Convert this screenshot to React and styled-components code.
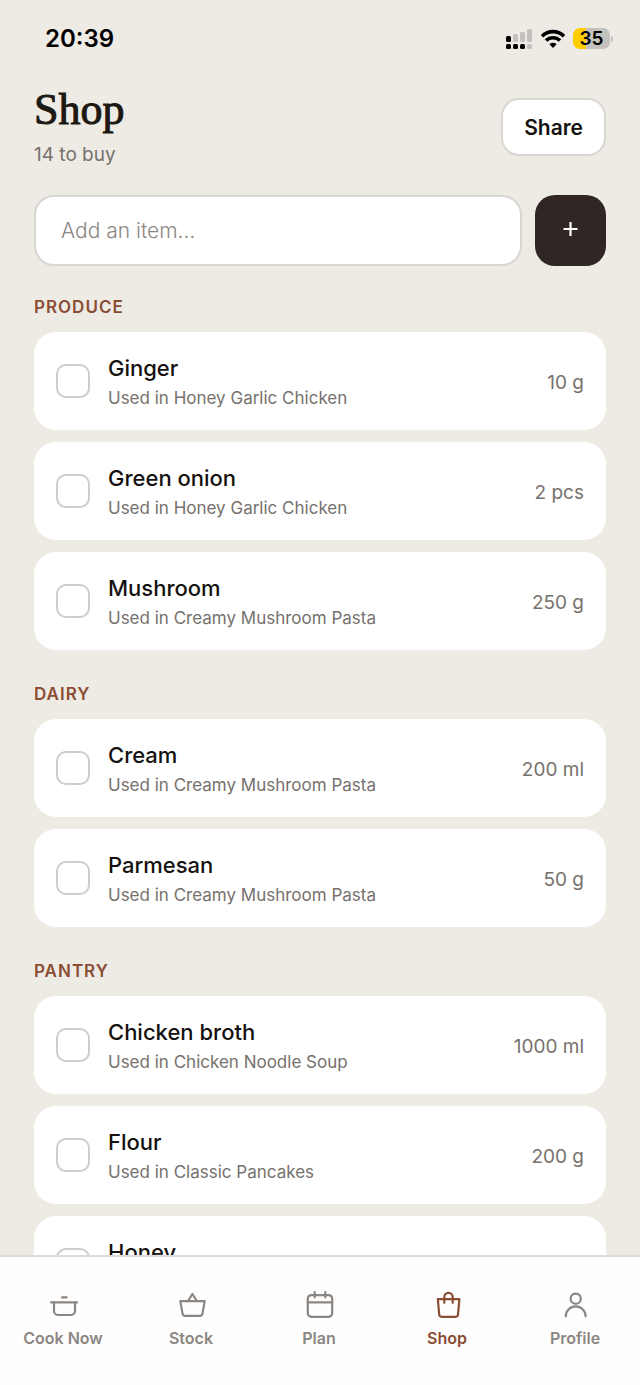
import React, { useState } from "react"
import styled, { createGlobalStyle } from "styled-components"

const groups = [
  {
    name: "Produce",
    items: [
      { id: "ginger", name: "Ginger", recipe: "Honey Garlic Chicken", amount: "10 g" },
      { id: "green-onion", name: "Green onion", recipe: "Honey Garlic Chicken", amount: "2 pcs" },
      { id: "mushroom", name: "Mushroom", recipe: "Creamy Mushroom Pasta", amount: "250 g" },
    ],
  },
  {
    name: "Dairy",
    items: [
      { id: "cream", name: "Cream", recipe: "Creamy Mushroom Pasta", amount: "200 ml" },
      { id: "parmesan", name: "Parmesan", recipe: "Creamy Mushroom Pasta", amount: "50 g" },
    ],
  },
  {
    name: "Pantry",
    items: [
      { id: "chicken-broth", name: "Chicken broth", recipe: "Chicken Noodle Soup", amount: "1000 ml" },
      { id: "flour", name: "Flour", recipe: "Classic Pancakes", amount: "200 g" },
      { id: "honey", name: "Honey", recipe: "Honey Garlic Chicken", amount: "30 ml" },
    ],
  },
]

const tabs = [
  {
    label: "Cook Now",
    icon: (
      <>
        <path d="M14 7.3h4.6" />
        <path d="M3 12.3h26" />
        <path d="M6 12.3v8.7a4 4 0 0 0 4 4h13a4 4 0 0 0 4-4v-8.7" />
      </>
    ),
  },
  {
    label: "Stock",
    icon: (
      <>
        <path d="M4.3 11.2h24.4l-2.3 12.7a2.3 2.3 0 0 1-2.3 1.9H8.9a2.3 2.3 0 0 1-2.3-1.9z" />
        <path d="M12 11l4.4-7 4.4 7" />
      </>
    ),
  },
  {
    label: "Plan",
    icon: (
      <>
        <rect x="3.8" y="5.1" width="24.4" height="21.7" rx="3.5" />
        <path d="M3.8 12.3h24.4M10.7 2v5.5M21.3 2v5.5" />
      </>
    ),
  },
  {
    label: "Shop",
    icon: (
      <>
        <path d="M5.8 9.1h21.6l-1.4 15.4a2.5 2.5 0 0 1-2.5 2.3H9.7a2.5 2.5 0 0 1-2.5-2.3z" />
        <path d="M12.3 12.8V7a4.2 4.2 0 0 1 8.4 0v5.8" />
      </>
    ),
  },
  {
    label: "Profile",
    icon: (
      <>
        <circle cx="15.7" cy="8.7" r="5.1" />
        <path d="M5.8 26.3a9.9 9.9 0 0 1 19.8 0" />
      </>
    ),
  },
]

function StatusBar() {
  return (
    <Status>
      <Clock>20:39</Clock>
      <StatusIcons>
        <svg width="27" height="22" viewBox="0 0 27 22">
          <g fill="#c3c1bd">
            <rect x="7" y="6" width="5" height="8" rx="1.5" />
            <rect x="14" y="4" width="5" height="10" rx="1.5" />
            <rect x="21" y="1" width="5" height="13" rx="1.5" />
            <rect x="21" y="16" width="5" height="5" rx="1.5" />
          </g>
          <rect x="0" y="8" width="5" height="6" rx="1.5" />
          <rect x="0" y="16" width="5" height="5" rx="1.5" />
          <rect x="7" y="16" width="5" height="5" rx="1.5" />
          <rect x="14" y="16" width="5" height="5" rx="1.5" />
        </svg>
        <svg width="24" height="20" viewBox="0 0 24 20">
          <g fill="none" stroke="#000" strokeWidth="3.6">
            <path d="M1 7.2a15.6 15.6 0 0 1 22 0" />
            <path d="M5 11.6a9.9 9.9 0 0 1 14 0" />
          </g>
          <path d="M12 19l-3.6-3.7a5.2 5.2 0 0 1 7.2 0z" />
        </svg>
        <Battery>
          <BatteryLevel>35</BatteryLevel>
          <BatteryTip />
        </Battery>
      </StatusIcons>
    </Status>
  )
}

function ShopItem({ item, checked, onToggle }) {
  return (
    <Card>
      <CheckBox type="checkbox" id={item.id} checked={checked} onChange={onToggle} />
      <ItemLabel htmlFor={item.id}>
        <ItemName $done={checked}>{item.name}</ItemName>
        <ItemNote>Used in {item.recipe}</ItemNote>
      </ItemLabel>
      <Amount>{item.amount}</Amount>
    </Card>
  )
}

function App() {
  const [checked, setChecked] = useState({})
  const [draft, setDraft] = useState("")
  const [activeTab, setActiveTab] = useState("Shop")

  const toggle = id => {
    setChecked({ ...checked, [id]: !checked[id] })
  }

  return (
    <>
      <GlobalStyle />
      <Screen>
        <StatusBar />
        <Content>
          <Header>
            <div>
              <Title>Shop</Title>
              <Subtitle>14 to buy</Subtitle>
            </div>
            <ShareButton type="button">Share</ShareButton>
          </Header>
          <AddForm onSubmit={e => e.preventDefault()}>
            <AddInput
              aria-label="Add an item"
              placeholder="Add an item…"
              value={draft}
              onChange={e => setDraft(e.target.value)}
            />
            <AddButton type="submit" aria-label="Add">
              <svg width="16" height="16" viewBox="0 0 16 16">
                <path d="M7.5 1v14M0.5 8h14" stroke="#fff" strokeWidth="2.2" />
              </svg>
            </AddButton>
          </AddForm>
          <Groups>
            {groups.map(group => (
              <section key={group.name}>
                <GroupTitle>{group.name}</GroupTitle>
                <Items>
                  {group.items.map(item => (
                    <ShopItem
                      key={item.id}
                      item={item}
                      checked={!!checked[item.id]}
                      onToggle={() => toggle(item.id)}
                    />
                  ))}
                </Items>
              </section>
            ))}
          </Groups>
        </Content>
        <TabBar>
          {tabs.map(tab => (
            <Tab
              key={tab.label}
              type="button"
              $active={tab.label === activeTab}
              onClick={() => setActiveTab(tab.label)}
            >
              <TabIcon viewBox="0 0 30 28">{tab.icon}</TabIcon>
              {tab.label}
            </Tab>
          ))}
        </TabBar>
      </Screen>
    </>
  )
}
export default App

const GlobalStyle = createGlobalStyle`
  * {
    box-sizing: border-box;
  }
  body {
    margin: 0;
    background: #eeebe5;
    color: #141210;
    font-family: Inter, "Liberation Sans", sans-serif;
  }
  button, input {
    font-family: inherit;
  }
`
const Screen = styled.div`
  display: flex;
  flex-direction: column;
  height: 100vh;
`
const Status = styled.div`
  display: flex;
  flex-shrink: 0;
  align-items: center;
  justify-content: space-between;
  height: 77px;
  padding: 0 27px 0 45px;
`
const Clock = styled.span`
  font-size: 24px;
  font-weight: 600;
  color: #000;
`
const StatusIcons = styled.div`
  display: flex;
  align-items: center;
  gap: 8px;
`
const Battery = styled.div`
  display: flex;
  align-items: center;
  gap: 1px;
`
const BatteryLevel = styled.span`
  width: 37px;
  height: 21px;
  border-radius: 7px;
  background: linear-gradient(to right, #ffcc00 35%, #c3c1bd 35%);
  color: #000;
  font-size: 19px;
  font-weight: 600;
  line-height: 21px;
  text-align: center;
`
const BatteryTip = styled.span`
  width: 2px;
  height: 6px;
  border-radius: 0 2px 2px 0;
  background: #c3c1bd;
`
const Content = styled.main`
  flex: 1;
  min-height: 0;
  overflow-y: auto;
  scrollbar-width: none;
  padding: 8px 34px 0;
`
const Header = styled.header`
  display: flex;
  align-items: center;
  justify-content: space-between;
`
const Title = styled.h1`
  margin: 0;
  font-family: "Liberation Serif", serif;
  font-size: 44px;
  font-weight: 400;
  line-height: 50px;
  -webkit-text-stroke: 1px #1c1812;
  color: #1c1812;
`
const Subtitle = styled.p`
  margin: 6px 0 0;
  font-size: 19px;
  line-height: 28px;
  color: #76716d;
`
const ShareButton = styled.button`
  height: 58px;
  padding: 1px 21px 0;
  border: 2px solid #dad7d3;
  border-radius: 18px;
  background: #fff;
  color: #141210;
  font-size: 21px;
  font-weight: 600;
  cursor: pointer;
`
const AddForm = styled.form`
  display: flex;
  gap: 13px;
  margin-top: 26px;
`
const AddInput = styled.input`
  flex: 1;
  min-width: 0;
  height: 71px;
  padding: 0 25px;
  border: 2px solid #d8d6d3;
  border-radius: 20px;
  background: #fff;
  color: #141210;
  font-size: 21px;
  &::placeholder {
    color: #8a8683;
    font-weight: 300;
    opacity: 1;
  }
`
const AddButton = styled.button`
  display: flex;
  align-items: center;
  justify-content: center;
  width: 71px;
  height: 71px;
  padding: 0 0 4px;
  border: none;
  border-radius: 20px;
  background: #302624;
  cursor: pointer;
`
const Groups = styled.div`
  display: flex;
  flex-direction: column;
  gap: 32px;
  padding-top: 29px;
`
const GroupTitle = styled.h2`
  margin: 0 0 13px;
  font-size: 17px;
  font-weight: 600;
  line-height: 24px;
  letter-spacing: 1px;
  text-transform: uppercase;
  color: #8a4d34;
`
const Items = styled.ul`
  display: flex;
  flex-direction: column;
  gap: 12px;
  margin: 0;
  padding: 0;
  list-style: none;
`
const Card = styled.li`
  display: flex;
  align-items: center;
  height: 98px;
  padding: 0 22px;
  border-radius: 22px;
  background: #fff;
`
const CheckBox = styled.input`
  appearance: none;
  flex-shrink: 0;
  width: 34px;
  height: 34px;
  margin: 0 18px 0 0;
  border: 2px solid #cfcdcb;
  border-radius: 10px;
  background: #fff;
  cursor: pointer;
  &:checked {
    border-color: #8a4d34;
    background: #8a4d34;
  }
`
const ItemLabel = styled.label`
  display: flex;
  flex: 1;
  flex-direction: column;
  padding-top: 2px;
  cursor: pointer;
`
const ItemName = styled.span`
  font-size: 22px;
  font-weight: 500;
  line-height: 32px;
  text-decoration: ${props => (props.$done ? "line-through" : "none")};
`
const ItemNote = styled.span`
  font-size: 17px;
  line-height: 28px;
  color: #76716d;
`
const Amount = styled.span`
  padding-top: 2px;
  font-size: 19px;
  color: #76716d;
`
const TabBar = styled.nav`
  display: grid;
  grid-template-columns: repeat(5, 1fr);
  flex-shrink: 0;
  height: 130px;
  border-top: 2px solid #dddcdb;
  background: #fefefe;
`
const Tab = styled.button`
  display: flex;
  flex-direction: column;
  align-items: center;
  gap: 8px;
  padding: 33px 2px 0 0;
  border: none;
  background: none;
  color: ${props => (props.$active ? "#8a4d34" : "#8b8682")};
  font-size: 16px;
  font-weight: 600;
  line-height: 24px;
  cursor: pointer;
`
const TabIcon = styled.svg`
  width: 30px;
  height: 28px;
  fill: none;
  stroke: currentColor;
  stroke-width: 2.2;
  stroke-linecap: round;
  stroke-linejoin: round;
`
